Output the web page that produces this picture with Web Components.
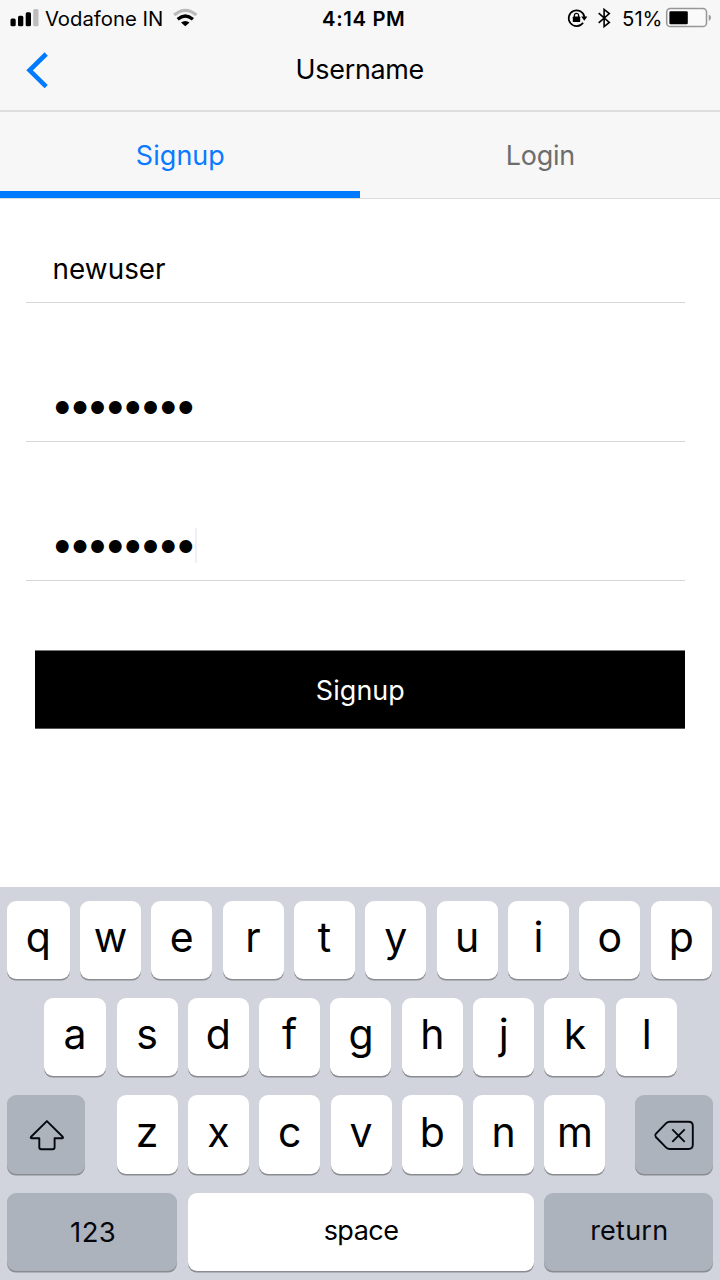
<!DOCTYPE html>
<html lang="en">
<head>
<meta charset="utf-8">
<title>Username</title>
<style>
  html, body { margin: 0; padding: 0; }
  body { width: 720px; height: 1280px; overflow: hidden; background: #fff; color: #000; font-family: Inter, "Liberation Sans", sans-serif; }
</style>
</head>
<body>
<signup-screen></signup-screen>
<script>
const define = (name, html, setup) => {
  const template = document.createElement('template');
  template.innerHTML = html;
  customElements.define(name, class extends HTMLElement {
    constructor() {
      super();
      this.attachShadow({ mode: 'open' }).append(template.content.cloneNode(true));
    }
    connectedCallback() { if (setup) setup(this, this.shadowRoot); }
  });
};

/* Text tracked so that its visible ink spans the requested width. */
define('fit-label', `
  <style>
    :host { display: block; flex: none; }
    span { display: block; white-space: nowrap; }
  </style>
  <span><slot></slot></span>`, (host, root) => {
  const text = host.textContent.trim();
  const size = +host.getAttribute('size');
  const width = +host.getAttribute('width');
  const weight = host.getAttribute('weight') || 400;
  const ctx = document.createElement('canvas').getContext('2d');
  ctx.font = weight + ' ' + size + 'px Inter, "Liberation Sans", sans-serif';
  const m = ctx.measureText(text);
  const ink = m.actualBoundingBoxLeft + m.actualBoundingBoxRight;
  const span = root.querySelector('span');
  host.style.width = width + 'px';
  span.style.font = ctx.font;
  span.style.lineHeight = Math.round(size * 1.3) + 'px';
  span.style.letterSpacing = ((width - ink) / (text.length - 1)) + 'px';
  span.style.marginLeft = (m.actualBoundingBoxLeft + 0.6) + 'px';
});

define('signal-icon', `
  <style>:host, svg { display: block; flex: none; }</style>
  <svg width="30" height="20" viewBox="9 8 30 20">
    <rect x="10.5" y="18.6" width="5.2" height="7.6" rx="1.5"/>
    <rect x="18" y="15.8" width="5.3" height="10.4" rx="1.5"/>
    <rect x="25.7" y="12.2" width="5.3" height="14" rx="1.5"/>
    <rect x="33.2" y="9" width="5.3" height="17.2" rx="1.5" fill="#bdbdbd"/>
  </svg>`);

define('wifi-icon', `
  <style>:host, svg { display: block; flex: none; }</style>
  <svg width="26" height="20" viewBox="173 8 26 20" fill="none" stroke-width="3.3">
    <path d="M175.2 15.1Q186.3 5.6 197.4 15.1" stroke="#bbb"/>
    <path d="M178.7 19.2Q186.3 12.9 193.9 19.2" stroke="#000"/>
    <path d="M182 22.6Q186.3 19.2 190.6 22.6L186.3 26.2Z" fill="#000"/>
  </svg>`);

define('rotation-lock-icon', `
  <style>:host, svg { display: block; flex: none; }</style>
  <svg width="22" height="20" viewBox="566 8 22 20">
    <path d="M583.1 22.7A7.9 7.9 0 1 1 584.4 17" fill="none" stroke="#000" stroke-width="1.7"/>
    <path d="M581.2 16.6H587.4L584.3 20.8Z"/>
    <rect x="572.8" y="16.6" width="7.4" height="5.5" rx=".7"/>
    <path d="M574.4 17V15.4a2.1 2.1 0 0 1 4.2 0V17" fill="none" stroke="#000" stroke-width="1.3"/>
  </svg>`);

define('bluetooth-icon', `
  <style>:host, svg { display: block; flex: none; }</style>
  <svg width="14" height="22" viewBox="597 7 14 22" fill="none" stroke="#000" stroke-width="1.6">
    <path d="M598.7 13.2L609.3 22.4L604.1 26.6V9.4L609.3 13.6L598.7 22.8"/>
  </svg>`);

define('battery-icon', `
  <style>:host, svg { display: block; flex: none; }</style>
  <svg width="47" height="22" viewBox="665 7 47 22">
    <rect x="666.7" y="8.6" width="39.8" height="18" rx="3.6" fill="#fafafa" stroke="#969696" stroke-width="1.5"/>
    <rect x="669.4" y="11.3" width="18.4" height="12.9" rx="1.2"/>
    <path d="M708.8 14.4Q711 15.4 711 17.6T708.8 20.9Z" fill="#969696"/>
  </svg>`);

define('chevron-icon', `
  <style>:host, svg { display: block; flex: none; }</style>
  <svg width="24" height="38" viewBox="25 51 24 38" fill="none" stroke="#007aff" stroke-width="4.6">
    <path d="M46.2 54L29.6 70.3L46.2 86.6"/>
  </svg>`);

define('shift-icon', `
  <style>:host, svg { display: block; flex: none; }</style>
  <svg width="38" height="34" viewBox="27.5 1118.5 38 34" fill="none" stroke="#05070d" stroke-width="1.9" stroke-linejoin="round">
    <path d="M47.4 1121.6L63.2 1137.2Q64 1138.7 62.6 1138.7H55.1V1147.8Q55.1 1149.7 53.2 1149.7H41.7Q39.8 1149.7 39.8 1147.8V1138.7H32Q30.6 1138.7 31.6 1137.2Z"/>
  </svg>`);

define('delete-icon', `
  <style>:host, svg { display: block; flex: none; }</style>
  <svg width="42" height="32" viewBox="653 1119 42 32" fill="none" stroke="#05070d" stroke-width="1.9" stroke-linejoin="round">
    <path d="M669.8 1121.8H688.6Q692.8 1121.8 692.8 1126V1144.8Q692.8 1149 688.6 1149H669.8Q667.6 1149 666.2 1147.6L655.8 1137Q654.5 1135.4 655.8 1133.9L666.2 1123.2Q667.6 1121.8 669.8 1121.8Z"/>
    <path d="M672.3 1129.3L684.7 1141.8M684.7 1129.3L672.3 1141.8"/>
  </svg>`);

define('status-bar', `
  <style>
    :host { display: flex; align-items: center; height: 36px; padding: 0 8px 0 9px; box-sizing: border-box; }
    .left { display: flex; align-items: center; width: 313.5px; }
    .left fit-label { margin: 0 11px 0 5.3px; }
    .right { display: flex; align-items: center; margin-left: auto; }
    bluetooth-icon { margin: 0 11.5px 0 9px; }
    battery-icon { margin-left: 5px; }
    fit-label { margin-top: 1px; }
    .left fit-label { margin-top: 1px; }
  </style>
  <div class="left"><signal-icon></signal-icon><fit-label size="20.3" width="117">Vodafone IN</fit-label><wifi-icon></wifi-icon></div>
  <fit-label size="20.3" width="81" weight="600">4:14 PM</fit-label>
  <div class="right"><rotation-lock-icon></rotation-lock-icon><bluetooth-icon></bluetooth-icon><fit-label size="20.3" width="37.5">51%</fit-label><battery-icon></battery-icon></div>`);

define('nav-bar', `
  <style>
    :host { display: grid; grid-template-columns: 1fr auto 1fr; align-items: center; height: 74px; padding: 0 25px 8px; box-sizing: border-box; }
    chevron-icon { margin-top: 1px; }
  </style>
  <chevron-icon></chevron-icon><slot></slot>`);

define('tab-item', `
  <style>
    :host { display: flex; flex: 1; align-items: center; justify-content: center; height: 87px; padding-top: 1px; box-sizing: border-box; color: #6d6d6d; border-bottom: 1px solid #dcdcde; }
    :host([active]) { color: #0a7aff; padding-top: 0; border-bottom: 0; background: linear-gradient(#007aff, #007aff) 0 79px / 100% 7px no-repeat, linear-gradient(#dcdcde, #dcdcde) 0 86px / 100% 1px no-repeat; }
  </style>
  <slot></slot>`);

define('tab-bar', `
  <style>:host { display: flex; border-top: 2px solid #dededf; height: 87px; }</style>
  <slot></slot>`);

define('form-field', `
  <style>
    :host { display: flex; align-items: center; height: 66px; margin: 0 35px 73px 26px; padding: 0 0 2px 28px; box-sizing: border-box; border-bottom: 1px solid #d6d6d8; }
    :host([secret]) { padding-left: 29px; }
    i { display: none; width: 2px; height: 35px; margin: 0 0 2px 2.4px; background: #efeffc; }
    :host([focused]) i { display: block; }
  </style>
  <slot></slot><i></i>`);

define('action-button', `
  <style>
    :host { display: flex; align-items: center; justify-content: center; width: 650px; height: 79px; margin: -4px auto 0 35px; padding-top: 1px; box-sizing: border-box; background: #000; border: solid; border-width: 1px 0; border-color: #777 transparent #555; color: #fff; }
  </style>
  <slot></slot>`);

define('key-cap', `
  <style>
    :host { display: flex; align-items: center; justify-content: center; height: 78.3px; box-sizing: border-box; padding-bottom: 6px; border-radius: 9px; background: #fff; box-shadow: 0 1.6px 0 #8a8c91; font-size: 41px; font-weight: 400; line-height: 50px; }
    :host([word]) { padding-bottom: 4px; }
    :host([dark]) { background: #acb3bd; color: #05070d; padding-bottom: 0; }
    :host([dark][word]) { padding-bottom: 4px; }
  </style>
  <slot></slot>`);

define('key-board', `
  <style>
    :host { display: flex; flex-direction: column; gap: 19.1px; height: 393px; padding: 13.7px 7.2px 0; box-sizing: border-box; background: #d1d4dc; }
    .row { display: grid; column-gap: 10.33px; }
    .r1 { grid-template-columns: 62.4px repeat(8, 61px) 61.6px; }
    .r2 { grid-template-columns: 62.4px repeat(7, 61px) 61.6px; padding-left: 36.6px; }
    .r3 { display: flex; gap: 10.3px; }
    .r3 key-cap { width: 61px; flex: none; }
    .r3 .wide { width: 78.2px; }
    .r3 .wide:first-child { margin-right: 21px; }
    .r3 .wide:last-child { margin-left: 19.2px; }
    .r4 { grid-template-columns: 170.3px 346px 168.8px; }
  </style>
  <div class="row r1"></div>
  <div class="row r2"></div>
  <div class="row r3"><key-cap dark class="wide"><shift-icon></shift-icon></key-cap><key-cap dark class="wide"><delete-icon></delete-icon></key-cap></div>
  <div class="row r4">
    <key-cap dark><fit-label size="27.5" width="43.7">123</fit-label></key-cap>
    <key-cap word><fit-label size="27" width="73.6">space</fit-label></key-cap>
    <key-cap dark word><fit-label size="27" width="74">return</fit-label></key-cap>
  </div>`, (host, root) => {
  const cap = letter => {
    const key = document.createElement('key-cap');
    key.textContent = letter;
    return key;
  };
  root.querySelector('.r1').append(...[...'qwertyuiop'].map(cap));
  root.querySelector('.r2').append(...[...'asdfghjkl'].map(cap));
  root.querySelector('.r3 .wide').after(...[...'zxcvbnm'].map(cap));
});

define('signup-screen', `
  <style>
    :host { display: flex; flex-direction: column; width: 720px; height: 1280px; background: #fff; }
    header { height: 199px; background: #f7f7f8; box-sizing: border-box; }
    main { flex: 1; min-height: 0; padding-top: 38px; box-sizing: border-box; }
  </style>
  <header>
    <status-bar></status-bar>
    <nav-bar><fit-label size="26.9" width="126">Username</fit-label></nav-bar>
    <tab-bar>
      <tab-item active><fit-label size="26.9" width="87.5">Signup</fit-label></tab-item>
      <tab-item><fit-label size="26.9" width="65.5">Login</fit-label></tab-item>
    </tab-bar>
  </header>
  <main>
    <form-field><fit-label size="27.8" width="110.5">newuser</fit-label></form-field>
    <form-field secret><fit-label size="17" width="137.4">●●●●●●●●</fit-label></form-field>
    <form-field secret focused><fit-label size="17" width="137.4">●●●●●●●●</fit-label></form-field>
    <action-button><fit-label size="26.9" width="87.5">Signup</fit-label></action-button>
  </main>
  <key-board></key-board>`);
</script>
</body>
</html>
